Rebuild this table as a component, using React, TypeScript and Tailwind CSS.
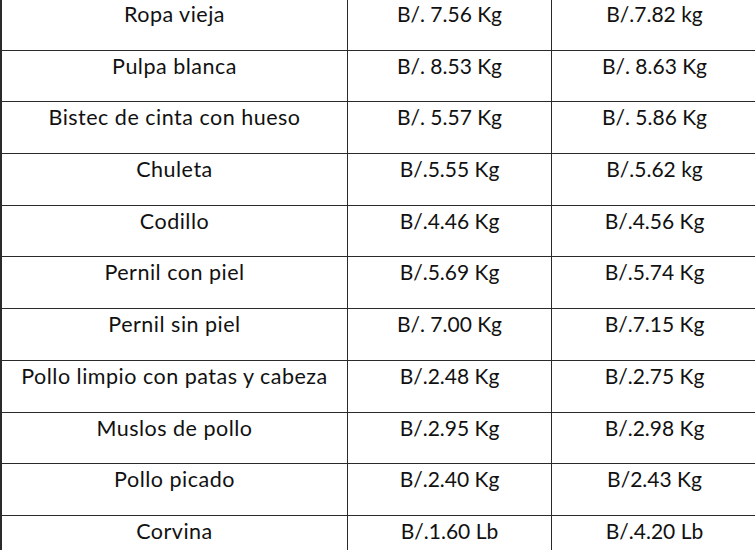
const rows: [string, string, string][] = [
  ["Ropa vieja", "B/. 7.56 Kg", "B/.7.82 kg"],
  ["Pulpa blanca", "B/. 8.53 Kg", "B/. 8.63 Kg"],
  ["Bistec de cinta con hueso", "B/. 5.57 Kg", "B/. 5.86 Kg"],
  ["Chuleta", "B/.5.55 Kg", "B/.5.62 kg"],
  ["Codillo", "B/.4.46 Kg", "B/.4.56 Kg"],
  ["Pernil con piel", "B/.5.69 Kg", "B/.5.74 Kg"],
  ["Pernil sin piel", "B/. 7.00 Kg", "B/.7.15 Kg"],
  ["Pollo limpio con patas y cabeza", "B/.2.48 Kg", "B/.2.75 Kg"],
  ["Muslos de pollo", "B/.2.95 Kg", "B/.2.98 Kg"],
  ["Pollo picado", "B/.2.40 Kg", "B/2.43 Kg"],
  ["Corvina", "B/.1.60 Lb", "B/.4.20 Lb"],
];

export default function App() {
  return (
    <div
      className="h-[550px] w-[755px] overflow-hidden bg-white text-[21px] text-[#111]"
      style={{ fontFamily: "Lato, 'Open Sans', sans-serif" }}
    >
      <div className="mt-[-1px] border-l-2 border-[#2a2a2a]">
        {rows.map((r) => (
          <div
            key={r[0]}
            className="grid h-[51.7px] grid-cols-[346px_204px_205px] border-b-[1.5px] border-[#2a2a2a]"
          >
            <div className="border-r-[1.5px] border-[#2a2a2a] pt-[2px] text-center text-[21.5px] leading-[26px] tracking-[0.5px]">
              {r[0]}
            </div>
            <div className="border-r-[1.5px] border-[#2a2a2a] pt-[2px] text-center leading-[26px]">
              {r[1]}
            </div>
            <div className="pt-[2px] text-center leading-[26px]">{r[2]}</div>
          </div>
        ))}
      </div>
    </div>
  );
}
